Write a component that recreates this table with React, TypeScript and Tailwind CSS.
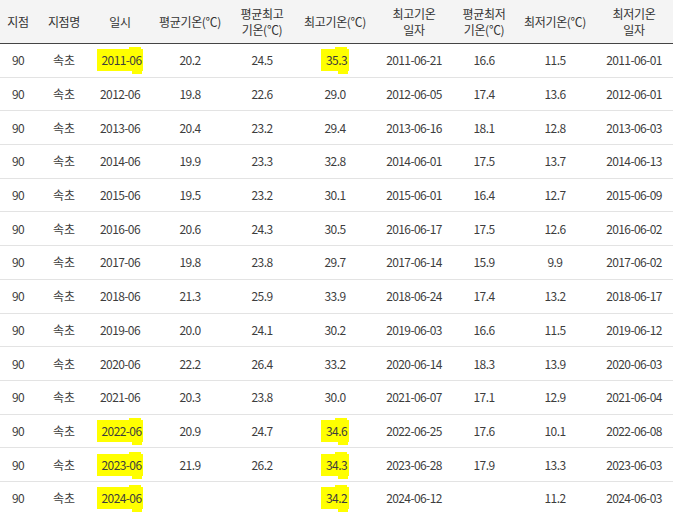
import React from 'react';

type Row = {
  date: string;
  avg: string;
  avgMax: string;
  max: string;
  maxDate: string;
  avgMin: string;
  min: string;
  minDate: string;
  hlDate?: boolean;
  hlMax?: boolean;
};

const rows: Row[] = [
  { date: '2011-06', avg: '20.2', avgMax: '24.5', max: '35.3', maxDate: '2011-06-21', avgMin: '16.6', min: '11.5', minDate: '2011-06-01', hlDate: true, hlMax: true },
  { date: '2012-06', avg: '19.8', avgMax: '22.6', max: '29.0', maxDate: '2012-06-05', avgMin: '17.4', min: '13.6', minDate: '2012-06-01' },
  { date: '2013-06', avg: '20.4', avgMax: '23.2', max: '29.4', maxDate: '2013-06-16', avgMin: '18.1', min: '12.8', minDate: '2013-06-03' },
  { date: '2014-06', avg: '19.9', avgMax: '23.3', max: '32.8', maxDate: '2014-06-01', avgMin: '17.5', min: '13.7', minDate: '2014-06-13' },
  { date: '2015-06', avg: '19.5', avgMax: '23.2', max: '30.1', maxDate: '2015-06-01', avgMin: '16.4', min: '12.7', minDate: '2015-06-09' },
  { date: '2016-06', avg: '20.6', avgMax: '24.3', max: '30.5', maxDate: '2016-06-17', avgMin: '17.5', min: '12.6', minDate: '2016-06-02' },
  { date: '2017-06', avg: '19.8', avgMax: '23.8', max: '29.7', maxDate: '2017-06-14', avgMin: '15.9', min: '9.9', minDate: '2017-06-02' },
  { date: '2018-06', avg: '21.3', avgMax: '25.9', max: '33.9', maxDate: '2018-06-24', avgMin: '17.4', min: '13.2', minDate: '2018-06-17' },
  { date: '2019-06', avg: '20.0', avgMax: '24.1', max: '30.2', maxDate: '2019-06-03', avgMin: '16.6', min: '11.5', minDate: '2019-06-12' },
  { date: '2020-06', avg: '22.2', avgMax: '26.4', max: '33.2', maxDate: '2020-06-14', avgMin: '18.3', min: '13.9', minDate: '2020-06-03' },
  { date: '2021-06', avg: '20.3', avgMax: '23.8', max: '30.0', maxDate: '2021-06-07', avgMin: '17.1', min: '12.9', minDate: '2021-06-04' },
  { date: '2022-06', avg: '20.9', avgMax: '24.7', max: '34.6', maxDate: '2022-06-25', avgMin: '17.6', min: '10.1', minDate: '2022-06-08', hlDate: true, hlMax: true },
  { date: '2023-06', avg: '21.9', avgMax: '26.2', max: '34.3', maxDate: '2023-06-28', avgMin: '17.9', min: '13.3', minDate: '2023-06-03', hlDate: true, hlMax: true },
  { date: '2024-06', avg: '', avgMax: '', max: '34.2', maxDate: '2024-06-12', avgMin: '', min: '11.2', minDate: '2024-06-03', hlDate: true, hlMax: true },
];

const cols = 'grid grid-cols-[36px_56px_56px_84px_60px_86px_72px_68px_74px_84px]';

// marker-style highlight, a bit ragged like a hand stroke
function Mark({ children }: { children: React.ReactNode }) {
  return (
    <span className="relative isolate inline-block pl-[5px] pr-[2px] py-[2px]">
      <span className="absolute inset-0 -z-10 bg-[#ffff00]" />
      <span className="absolute -top-[2px] right-[2px] h-[4px] w-[12px] -z-10 bg-[#ffff00]" />
      <span className="absolute -bottom-[3px] right-[1px] h-[4px] w-[10px] -z-10 bg-[#ffff00]" />
      {children}
    </span>
  );
}

function Head({ children }: { children: React.ReactNode }) {
  return <div className="flex items-center justify-center text-center leading-[16px] tracking-[-0.3px]">{children}</div>;
}

export default function App() {
  return (
    <div className="w-[673px] h-[515px] overflow-hidden bg-white text-[12px] font-['Noto_Sans_CJK_KR','Noto_Sans',sans-serif]">
      <div className="w-[676px]">
        <div className={`${cols} h-[44px] bg-[#f4f4f4] border-b border-[#444] text-[#333]`}>
          <Head>지점</Head>
          <Head>지점명</Head>
          <Head>일시</Head>
          <Head>평균기온(℃)</Head>
          <Head>평균최고<br />기온(℃)</Head>
          <Head>최고기온(℃)</Head>
          <Head>최고기온<br />일자</Head>
          <Head>평균최저<br />기온(℃)</Head>
          <Head>최저기온(℃)</Head>
          <Head>최저기온<br />일자</Head>
        </div>
        {rows.map((r) => (
          <div key={r.date} className={`${cols} h-[33.7px] border-b border-[#e3e3e3] text-[#3d3d3d] items-center text-center tracking-[-0.6px]`}>
            <div>90</div>
            <div className="tracking-normal">속초</div>
            <div>{r.hlDate ? <Mark>{r.date}</Mark> : r.date}</div>
            <div>{r.avg}</div>
            <div>{r.avgMax}</div>
            <div>{r.hlMax ? <Mark>{r.max}</Mark> : r.max}</div>
            <div>{r.maxDate}</div>
            <div>{r.avgMin}</div>
            <div>{r.min}</div>
            <div>{r.minDate}</div>
          </div>
        ))}
      </div>
    </div>
  );
}
